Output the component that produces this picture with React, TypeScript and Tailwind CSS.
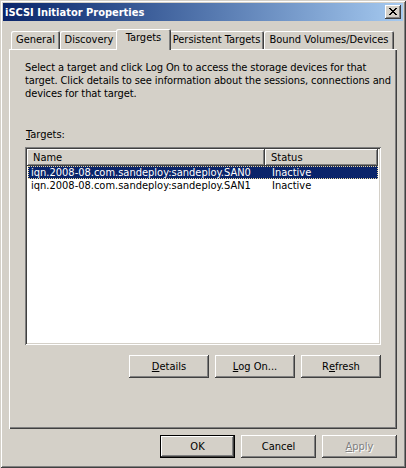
const raised =
  "shadow-[inset_-1px_-1px_0_#404040,inset_1px_1px_0_#fff,inset_-2px_-2px_0_#808080]";

const Btn = ({
  children,
  w = "w-[75px]",
  disabled = false,
  isDefault = false,
}: {
  children: React.ReactNode;
  w?: string;
  disabled?: boolean;
  isDefault?: boolean;
}) => {
  if (isDefault) {
    return (
      <div className={`${w} h-[23px] border border-black bg-[#D4D0C8]`}>
        <div className="flex h-full w-full items-center justify-center shadow-[inset_-1px_-1px_0_#404040,inset_1px_1px_0_#fff,inset_-2px_-2px_0_#808080]">
          {children}
        </div>
      </div>
    );
  }
  return (
    <div
      className={`${w} h-[23px] flex items-center justify-center bg-[#D4D0C8] ${raised} ${
        disabled ? "text-[#808080] [text-shadow:1px_1px_0_#fff]" : ""
      }`}
    >
      {children}
    </div>
  );
};

const Tab = ({ label, w, active = false }: { label: string; w: string; active?: boolean }) => {
  if (active) {
    return (
      <div
        className={`${w} relative z-10 -mx-[2px] h-[21px] -mb-[1px] self-end rounded-t-[2px] bg-[#D4D0C8] shadow-[inset_1px_1px_0_#fff,inset_-1px_0_0_#404040,inset_-2px_0_0_#808080] flex justify-center pt-[2px]`}
      >
        {label}
      </div>
    );
  }
  return (
    <div
      className={`${w} h-[18px] self-end rounded-t-[2px] bg-[#D4D0C8] shadow-[inset_1px_1px_0_#fff,inset_-1px_0_0_#404040,inset_-2px_0_0_#808080] flex justify-center pt-[2px]`}
    >
      {label}
    </div>
  );
};

const rows = [
  { name: "iqn.2008-08.com.sandeploy:sandeploy.SAN0", status: "Inactive" },
  { name: "iqn.2008-08.com.sandeploy:sandeploy.SAN1", status: "Inactive" },
];

export default function App() {
  return (
    <div className="w-[406px] h-[468px] bg-[#D4D0C8] p-[3px] text-[11px] leading-[13px] text-black font-['DejaVu_Sans_Condensed',Tahoma,'Liberation_Sans',sans-serif] shadow-[inset_1px_1px_0_#D4D0C8,inset_-1px_-1px_0_#404040,inset_2px_2px_0_#fff,inset_-2px_-2px_0_#808080] flex flex-col">
      {/* title bar */}
      <div className="h-[18px] bg-linear-to-r from-[#0A246A] to-[#A6CAF0] flex items-center justify-between pl-[2px] pr-[2px]">
        <span className="text-white font-bold">iSCSI Initiator Properties</span>
        <div className={`w-[16px] h-[14px] bg-[#D4D0C8] ${raised} flex items-center justify-center`}>
          <svg width="8" height="7" viewBox="0 0 8 7" className="-mt-[1px]">
            <path
              d="M0 0h2v1h1v1h2V1h1V0h2v1H7v1H6v1H5v1h1v1h1v1h1v1H6V6H5V5H3v1H2v1H0V6h1V5h1V4h1V3H2V2H1V1H0z"
              fill="#000"
            />
          </svg>
        </div>
      </div>

      <div className="ml-[6px] mt-[8px] w-[388px]">
        {/* tabs */}
        <div className="h-[20px] flex pl-[2px]">
          <Tab label="General" w="w-[49px]" />
          <Tab label="Discovery" w="w-[58px]" />
          <Tab label="Targets" w="w-[55px]" active />
          <Tab label="Persistent Targets" w="w-[95px]" />
          <Tab label="Bound Volumes/Devices" w="w-[130px]" />
        </div>

        {/* panel */}
        <div className="h-[380px] flex flex-col px-[16px] pt-[12px] shadow-[inset_1px_1px_0_#fff,inset_-1px_-1px_0_#404040,inset_-2px_-2px_0_#808080]">
          <p className="whitespace-nowrap tracking-[-0.1px]">
            Select a target and click Log On to access the storage devices for that
            <br />
            target. Click details to see information about the sessions, connections and
            <br />
            devices for that target.
          </p>

          <div className="mt-[28px] pl-[1px]">
            <span className="underline">T</span>argets:
          </div>

          {/* list view */}
          <div className="mt-[6px] w-[356px] h-[198px] bg-white p-[2px] shadow-[inset_1px_1px_0_#808080,inset_-1px_-1px_0_#fff,inset_2px_2px_0_#404040,inset_-2px_-2px_0_#D4D0C8]">
            <div className="flex h-[17px]">
              <div className={`w-[238px] ${raised} bg-[#D4D0C8] pl-[6px] pt-[2px]`}>Name</div>
              <div className={`w-[113px] ${raised} bg-[#D4D0C8] pl-[6px] pt-[2px]`}>Status</div>
            </div>
            {rows.map((r, i) => (
              <div
                key={r.name}
                className={`flex h-[13px] ml-[1px] w-[350px] ${
                  i === 0
                    ? "bg-[#0A246A] text-white outline outline-dotted outline-[#E8D7A0] -outline-offset-1"
                    : ""
                }`}
              >
                <div className="w-[237px] pl-[3px]">{r.name}</div>
                <div className="pl-[7px]">{r.status}</div>
              </div>
            ))}
          </div>

          <div className="mt-[10px] w-[356px] flex justify-end gap-[6px]">
            <Btn w="w-[80px]">
              <span className="underline">D</span>etails
            </Btn>
            <Btn w="w-[80px]">
              <span className="underline">L</span>og On...
            </Btn>
            <Btn w="w-[80px]">
              R<span className="underline">e</span>fresh
            </Btn>
          </div>
        </div>

        {/* dialog buttons */}
        <div className="mt-[6px] flex justify-end gap-[6px]">
          <Btn isDefault>OK</Btn>
          <Btn>Cancel</Btn>
          <Btn disabled>
            <span className="underline">A</span>pply
          </Btn>
        </div>
      </div>
    </div>
  );
}
